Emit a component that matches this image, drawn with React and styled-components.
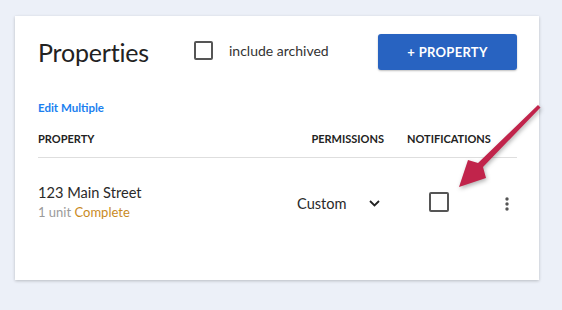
import React from "react";
import styled, { createGlobalStyle } from "styled-components";

const Global = createGlobalStyle`
  html, body { margin: 0; padding: 0; }
  body {
    background: #ecf0f8;
    font-family: Lato, "Noto Sans", sans-serif;
    color: #262626;
  }
`;

const Page = styled.div`
  position: relative;
  width: 562px;
  height: 310px;
  padding: 16px 0 0 15px;
  box-sizing: border-box;
`;

const Card = styled.div`
  width: 524px;
  height: 264px;
  box-sizing: border-box;
  background: #fff;
  box-shadow: 0 1px 3px rgba(0, 0, 0, 0.22);
  padding: 18px 22px 0 23px;
  display: flex;
  flex-direction: column;
`;

const Header = styled.div`
  display: flex;
  align-items: center;
  height: 36px;
`;

const Title = styled.h1`
  margin: 0;
  font-size: 25px;
  font-weight: 400;
  color: #222;
  letter-spacing: -0.2px;
  width: 156px;
`;

const Box = styled.span`
  display: inline-block;
  width: ${(p) => p.$size}px;
  height: ${(p) => p.$size}px;
  box-sizing: border-box;
  border: 2px solid #555;
  border-radius: 2px;
`;

const CheckLabel = styled.label`
  display: flex;
  align-items: center;
  gap: 16px;
  font-size: 14px;
  color: #333;
  margin-top: -4px;
`;

const AddButton = styled.button`
  margin-left: auto;
  width: 139px;
  height: 36px;
  border: none;
  border-radius: 3px;
  background: #2863c1;
  color: #fff;
  font-family: inherit;
  font-size: 13px;
  font-weight: 700;
  letter-spacing: 0.3px;
  box-shadow: 0 1px 2px rgba(0, 0, 0, 0.25);
`;

const EditLink = styled.a`
  margin-top: 31px;
  font-size: 11.5px;
  font-weight: 700;
  color: #1a7ff0;
  line-height: 14px;
`;

const Grid = styled.div`
  display: grid;
  grid-template-columns: 1fr 100px 103px 30px;
  align-items: center;
`;

const HeadRow = styled(Grid)`
  margin-top: 13px;
  height: 21px;
  padding-bottom: 8px;
  border-bottom: 1px solid #dedede;
`;

const HeadCell = styled.div`
  font-size: 11px;
  font-weight: 700;
  color: #222;
  text-transform: uppercase;
  text-align: ${(p) => p.$align || "left"};
  padding-left: ${(p) => p.$pl || 0}px;
  white-space: nowrap;
`;

const BodyRow = styled(Grid)`
  margin-top: 26px;
`;

const NameCell = styled.div`
  display: flex;
  flex-direction: column;
  gap: 3px;
`;

const Name = styled.div`
  font-size: 14.6px;
  color: #2a2a2a;
`;

const Sub = styled.div`
  font-size: 13px;
  color: #9a9a9a;
`;

const Status = styled.span`
  color: #c98a1e;
`;

const Select = styled.div`
  display: flex;
  align-items: center;
  justify-content: space-between;
  padding: 0 4px 0 13px;
  font-size: 14.6px;
  color: #2a2a2a;
  margin-top: 3px;
`;

const NotifCell = styled.div`
  padding-left: 45px;
  display: flex;
  margin-top: -1px;
`;

const Kebab = styled.div`
  display: flex;
  justify-content: flex-end;
  padding-right: 8px;
  margin-top: 4px;
`;

const Arrow = styled.svg`
  position: absolute;
  left: 440px;
  top: 95px;
  overflow: visible;
  filter: drop-shadow(1px 2px 2px rgba(0, 0, 0, 0.3));
`;

export default function App() {
  return (
    <>
      <Global />
      <Page>
        <Card>
          <Header>
            <Title>Properties</Title>
            <CheckLabel>
              <Box $size={19} />
              include archived
            </CheckLabel>
            <AddButton>+ PROPERTY</AddButton>
          </Header>
          <EditLink>Edit Multiple</EditLink>
          <HeadRow>
            <HeadCell>Property</HeadCell>
            <HeadCell $align="right">Permissions</HeadCell>
            <HeadCell $pl={23}>Notifications</HeadCell>
          </HeadRow>
          <BodyRow>
            <NameCell>
              <Name>123 Main Street</Name>
              <Sub>
                1 unit <Status>Complete</Status>
              </Sub>
            </NameCell>
            <Select>
              Custom
              <svg width="11" height="7" viewBox="0 0 11 7">
                <path d="M1 1l4.5 4.5L10 1" fill="none" stroke="#222" strokeWidth="1.8" />
              </svg>
            </Select>
            <NotifCell>
              <Box $size={20} />
            </NotifCell>
            <Kebab>
              <svg width="4" height="14" viewBox="0 0 4 14">
                <circle cx="2" cy="2" r="1.7" fill="#555" />
                <circle cx="2" cy="7" r="1.7" fill="#555" />
                <circle cx="2" cy="12" r="1.7" fill="#555" />
              </svg>
            </Kebab>
          </BodyRow>
        </Card>
        <Arrow width="110" height="100" viewBox="0 0 110 100">
          <path
            d="M98 10 L100.5 12.5 L43 72 L46 83 L19 92 L28 65 L38 68 Z"
            fill="#c1244b"
          />
        </Arrow>
      </Page>
    </>
  );
}
